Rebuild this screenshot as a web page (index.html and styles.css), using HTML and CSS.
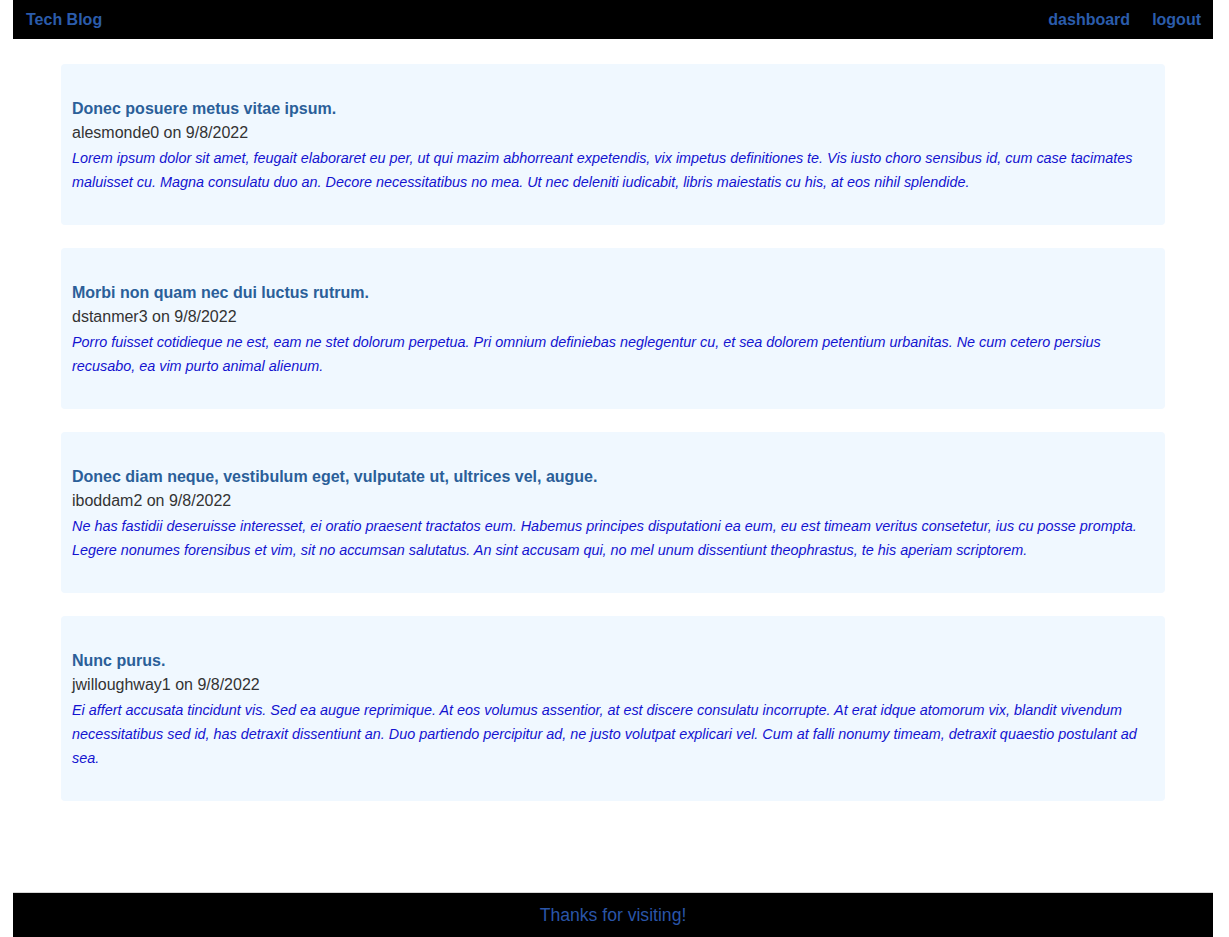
FILE: index.html
```html
<!DOCTYPE html>
<html lang="en">
<head>
<meta charset="utf-8">
<title>Tech Blog</title>
<link rel="stylesheet" href="styles.css">
</head>
<body>
<header class="site-header">
  <a class="brand" href="#">Tech Blog</a>
  <nav class="nav">
    <a href="#">dashboard</a>
    <a href="#">logout</a>
  </nav>
</header>
<main class="posts">
  <article class="post">
    <h3 class="post-title">Donec posuere metus vitae ipsum.</h3>
    <p class="post-meta">alesmonde0 on 9/8/2022</p>
    <p class="post-body">Lorem ipsum dolor sit amet, feugait elaboraret eu per, ut qui mazim abhorreant expetendis, vix impetus definitiones te. Vis iusto choro sensibus id, cum case tacimates maluisset cu. Magna consulatu duo an. Decore necessitatibus no mea. Ut nec deleniti iudicabit, libris maiestatis cu his, at eos nihil splendide.</p>
  </article>
  <article class="post">
    <h3 class="post-title">Morbi non quam nec dui luctus rutrum.</h3>
    <p class="post-meta">dstanmer3 on 9/8/2022</p>
    <p class="post-body">Porro fuisset cotidieque ne est, eam ne stet dolorum perpetua. Pri omnium definiebas neglegentur cu, et sea dolorem petentium urbanitas. Ne cum cetero persius recusabo, ea vim purto animal alienum.</p>
  </article>
  <article class="post">
    <h3 class="post-title">Donec diam neque, vestibulum eget, vulputate ut, ultrices vel, augue.</h3>
    <p class="post-meta">iboddam2 on 9/8/2022</p>
    <p class="post-body">Ne has fastidii deseruisse interesset, ei oratio praesent tractatos eum. Habemus principes disputationi ea eum, eu est timeam veritus consetetur, ius cu posse prompta. Legere nonumes forensibus et vim, sit no accumsan salutatus. An sint accusam qui, no mel unum dissentiunt theophrastus, te his aperiam scriptorem.</p>
  </article>
  <article class="post">
    <h3 class="post-title">Nunc purus.</h3>
    <p class="post-meta">jwilloughway1 on 9/8/2022</p>
    <p class="post-body">Ei affert accusata tincidunt vis. Sed ea augue reprimique. At eos volumus assentior, at est discere consulatu incorrupte. At erat idque atomorum vix, blandit vivendum necessitatibus sed id, has detraxit dissentiunt an. Duo partiendo percipitur ad, ne justo volutpat explicari vel. Cum at falli nonumy timeam, detraxit quaestio postulant ad sea.</p>
  </article>
</main>
<footer class="site-footer">Thanks for visiting!</footer>
</body>
</html>
```

FILE: styles.css
```css
html, body {
  height: 100%;
}
body {
  margin: 0 16px 0 13px;
  font-family: "Liberation Sans", Arial, sans-serif;
  background: #ffffff;
  display: flex;
  flex-direction: column;
  min-height: 100vh;
}
.site-header {
  height: 39px;
  background: #000000;
  display: flex;
  align-items: center;
  justify-content: space-between;
  padding: 0 12px 0 13px;
  box-sizing: border-box;
  flex-shrink: 0;
}
.site-header a {
  color: #2b5cab;
  text-decoration: none;
  font-weight: bold;
  font-size: 16px;
}
.nav {
  display: flex;
  gap: 22px;
}
.posts {
  display: flex;
  flex-direction: column;
  gap: 23px;
  padding: 25px 48px 0;
}
.post {
  background: #f0f8ff;
  border-radius: 4px;
  padding: 33px 11px 31px;
}
.post-title {
  margin: 0;
  font-size: 16px;
  line-height: 24px;
  font-weight: bold;
  color: #2b5f99;
}
.post-meta {
  margin: 0 0 1px;
  font-size: 16px;
  line-height: 24px;
  color: #333333;
}
.post-body {
  margin: 0;
  font-size: 14.4px;
  line-height: 24px;
  font-style: italic;
  color: #1313d0;
}
.site-footer {
  margin-top: auto;
  height: 45px;
  flex-shrink: 0;
  background: #000000;
  border-top: 1px solid #d6d6d6;
  box-sizing: border-box;
  display: flex;
  align-items: center;
  justify-content: center;
  color: #2a55a8;
  font-size: 17.6px;
}
```
